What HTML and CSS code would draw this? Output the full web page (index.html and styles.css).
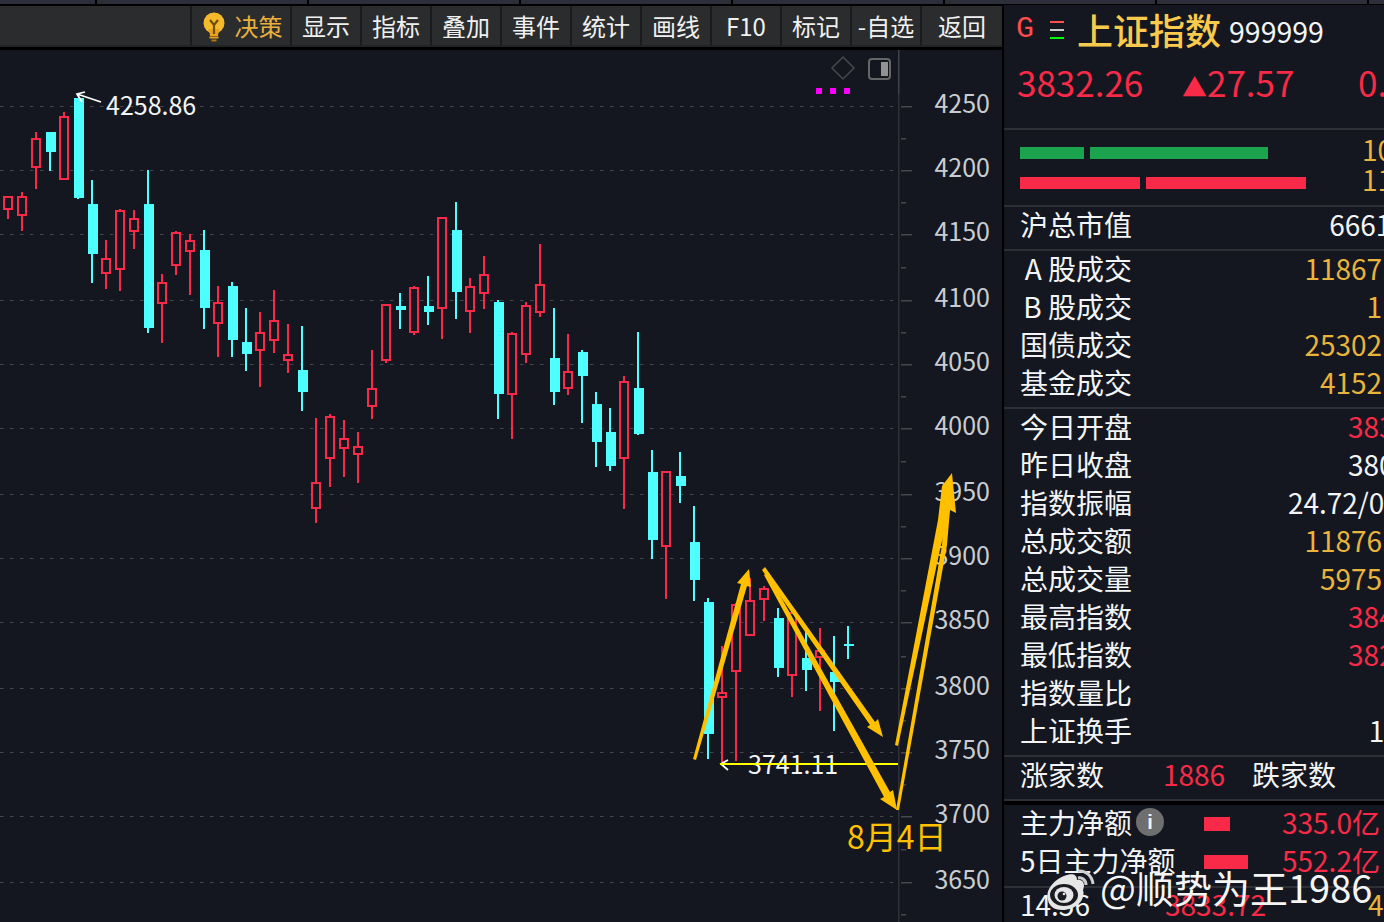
FILE: index.html
```html
<!DOCTYPE html>
<html lang="zh-CN">
<head>
  <meta charset="UTF-8">
  <title>上证指数 999999</title>
  <link rel="stylesheet" href="styles.css">
</head>
<body>
  <div class="tabs">
    <span class="tab tab-first"></span><span class="tab"></span><span class="tab"></span><span class="tab"></span><span class="tab"></span><span class="tab"></span><span class="tab"></span><span class="tab"></span>
  </div>

  <div class="main">
    <div class="left">
      <div class="toolbar">
        <div class="tool-space"></div>
        <div class="tool tool-wide">
          <svg class="bulb" width="22" height="30" viewBox="0 0 22 30">
            <circle cx="11" cy="11" r="10.5" fill="#f6b92c"/>
            <path d="M5 17 C7 21 7 23 7 24 H15 C15 23 15 21 17 17 Z" fill="#e8a21c"/>
            <path d="M7 8 L11 13 L15 8 M11 13 V22" fill="none" stroke="#6e4d0c" stroke-width="2.2"/>
            <rect x="6.5" y="24.5" width="9" height="2" fill="#e8a21c"/>
            <rect x="8.5" y="27.5" width="5" height="2" fill="#a87a18"/>
          </svg>
          <span class="tool-gold">决策</span>
        </div>
        <div class="tool">显示</div>
        <div class="tool">指标</div>
        <div class="tool">叠加</div>
        <div class="tool">事件</div>
        <div class="tool">统计</div>
        <div class="tool">画线</div>
        <div class="tool">F10</div>
        <div class="tool">标记</div>
        <div class="tool">-自选</div>
        <div class="tool tool-last">返回</div>
      </div>

      <div class="chart">
        <svg id="kline" width="1002" height="872" viewBox="0 50 1002 872">
          <g id="grid"></g>
          <g id="candles"></g>

          <rect x="898" y="50" width="1.5" height="44" fill="#3f4248"/>
          <rect x="898" y="94" width="1.5" height="828" fill="#2e3137"/>

          <path class="diamond" d="M843 57 L854 68 L843 79 L832 68 Z"/>
          <rect class="pane-box" x="869" y="59" width="21" height="20" rx="3"/>
          <rect x="881" y="62" width="7" height="14" fill="#929292"/>
          <rect class="dot" x="816" y="88" width="6" height="6"/>
          <rect class="dot" x="830" y="88" width="6" height="6"/>
          <rect class="dot" x="844" y="88" width="6" height="6"/>

          <g class="axis">
            <text x="990" y="113">4250</text>
            <text x="990" y="177">4200</text>
            <text x="990" y="241">4150</text>
            <text x="990" y="307">4100</text>
            <text x="990" y="371">4050</text>
            <text x="990" y="435">4000</text>
            <text x="990" y="501">3950</text>
            <text x="990" y="565">3900</text>
            <text x="990" y="629">3850</text>
            <text x="990" y="695">3800</text>
            <text x="990" y="759">3750</text>
            <text x="990" y="823">3700</text>
            <text x="990" y="889">3650</text>
          </g>

          <path class="pointer" d="M101 102 L77 94 M85 92 L77 94 L82 102"/>
          <text class="price-tag" x="106" y="115">4258.86</text>
          <text class="price-tag" x="748" y="774">3741.11</text>
          <path class="pointer" d="M728 760 L721 764 L728 770"/>
          <rect x="720" y="763" width="178" height="2" fill="#ffff00"/>

          <g class="drawn">
            <polygon points="693,759 741,584 737,583 749,569 751,587 747,586 696,760"/>
            <polygon points="765,567 875,722 878,719 883,737 867,727 870,725 762,570"/>
            <polygon points="767,572 890,792 893,790 897,810 880,799 884,797 764,575"/>
            <polygon points="895,745 938,520 942,486 952,473 950,510 941,545 898,746"/>
            <polygon points="896,810 942,545 944,508 952,473 956,513 950,510 947,545 899,810"/>
          </g>
          <text class="date-note" x="847" y="849">8月4日</text>
        </svg>
      </div>
    </div>

    <div class="panel">
      <div class="head">
        <span class="g-mark">G</span>
        <span class="menu-mark"><i class="m-red"></i><i class="m-gray"></i><i class="m-green"></i></span>
        <span class="index-name">上证指数</span>
        <span class="index-code">999999</span>
      </div>
      <div class="quote red">
        <span class="q-price">3832.26</span>
        <span class="q-change"><span class="q-up">▲</span>27.57</span>
        <span>0.72%</span>
      </div>

      <div class="group bars">
        <div class="bar-row">
          <div class="bar-track"><span class="bar green" style="width:64px"></span><span class="bar green" style="width:178px"></span></div>
          <span class="gold">10</span>
        </div>
        <div class="bar-row">
          <div class="bar-track"><span class="bar redbg" style="width:120px"></span><span class="bar redbg" style="width:160px"></span></div>
          <span class="gold">11</span>
        </div>
      </div>

      <div class="group">
        <div class="row"><span class="lbl">沪总市值</span><span class="val">6661.0 亿</span></div>
      </div>

      <div class="group">
        <div class="row"><span class="lbl">A 股成交</span><span class="val gold">11867.32亿</span></div>
        <div class="row"><span class="lbl">B 股成交</span><span class="val gold">1.25亿</span></div>
        <div class="row"><span class="lbl">国债成交</span><span class="val gold">25302.10亿</span></div>
        <div class="row"><span class="lbl">基金成交</span><span class="val gold">4152.46亿</span></div>
      </div>

      <div class="group">
        <div class="row"><span class="lbl">今日开盘</span><span class="val red">3830.15</span></div>
        <div class="row"><span class="lbl">昨日收盘</span><span class="val">3804.69</span></div>
        <div class="row"><span class="lbl">指数振幅</span><span class="val">24.72/0.65%</span></div>
        <div class="row"><span class="lbl">总成交额</span><span class="val gold">11876.00亿</span></div>
        <div class="row"><span class="lbl">总成交量</span><span class="val gold">5975.00亿</span></div>
        <div class="row"><span class="lbl">最高指数</span><span class="val red">3845.37</span></div>
        <div class="row"><span class="lbl">最低指数</span><span class="val red">3820.65</span></div>
        <div class="row"><span class="lbl">指数量比</span><span class="val"></span></div>
        <div class="row"><span class="lbl">上证换手</span><span class="val">1.25%</span></div>
      </div>

      <div class="group">
        <div class="row row-count">
          <span class="lbl">涨家数</span><span class="red">1886</span><span class="lbl">跌家数</span>
        </div>
      </div>

      <div class="group group-flow">
        <div class="row row-flow">
          <span class="lbl lbl-icon">主力净额<i class="info">i</i></span>
          <span class="bar redbg flow-bar" style="width:26px"></span>
          <span class="red flow-val">335.0亿</span>
        </div>
        <div class="row row-flow">
          <span class="lbl">5日主力净额</span>
          <span class="bar redbg flow-bar" style="width:44px"></span>
          <span class="red flow-val">552.2亿</span>
        </div>
      </div>

      <div class="tick-row">
        <span class="lbl">14:56</span><span class="red">3833.72</span><span class="gold">4</span>
      </div>

      <div class="watermark">
        <svg width="64" height="56" viewBox="0 0 64 56">
          <path d="M8 40 C5 30 14 20 24 16 C32 13 37 14 37 20 C42 19 46 23 43 30 C46 40 36 50 22 50 C14 50 9 46 8 40Z" fill="#e6e6e6"/>
          <ellipse cx="24" cy="35" rx="14" ry="11" fill="#1a1c22"/>
          <ellipse cx="24" cy="35" rx="9.5" ry="8" fill="#e6e6e6"/>
          <circle cx="22" cy="36" r="4.5" fill="#1a1c22"/>
          <circle cx="24" cy="34" r="1.3" fill="#e6e6e6"/>
          <path d="M38 11 C46 10 52 16 53 24 M38 18 C42 17 46 20 46 25" fill="none" stroke="#cfcfcf" stroke-width="3"/>
        </svg>
        <span class="wm-text">@顺势为王1986</span>
      </div>
    </div>
  </div>

  <script src="chart.js"></script>
</body>
</html>
```

FILE: styles.css
```css
* {
  box-sizing: border-box;
}
html, body {
  margin: 0;
  height: 922px;
  overflow: hidden;
}
body {
  width: 1384px;
  position: relative;
  background: #000;
  color: #f2f4f6;
  font-family: "Noto Sans CJK SC", "Noto Sans", sans-serif;
  font-size: 28px;
}

.tabs {
  display: flex;
  gap: 2px;
  height: 4px;
  margin-bottom: 2px;
}
.tab {
  flex: 0 0 210px;
  background: #2c2f3a;
}
.tab-first {
  flex-basis: 95px;
}

.main {
  display: flex;
  gap: 2px;
  height: 916px;
}
.left {
  flex: 0 0 1002px;
  display: flex;
  flex-direction: column;
}

/* toolbar */
.toolbar {
  display: flex;
  height: 41px;
  margin-bottom: 3px;
  border-bottom: 2px solid #212326;
  background: #2a2c2e;
  font-size: 24px;
  color: #f0f0f0;
}
.tool-space {
  flex: 0 0 190px;
}
.tool {
  flex: 0 0 70px;
  display: flex;
  align-items: center;
  justify-content: center;
  border-left: 2px solid #191b1f;
}
.tool-wide {
  flex-basis: 100px;
  gap: 10px;
  padding-left: 3px;
}
.tool-last {
  flex: 1;
}
.tool-gold {
  color: #e9b03c;
}
.bulb {
  margin-top: 2px;
}

/* chart */
.chart {
  flex: 1;
  background: #14171f;
}
#kline {
  display: block;
}
#grid line {
  stroke: #44474c;
  stroke-width: 1.2;
}
.axis text {
  font-size: 25px;
  fill: #c9cdd2;
  text-anchor: end;
}
.diamond {
  fill: none;
  stroke: #45484d;
  stroke-width: 1.5;
}
.pane-box {
  fill: none;
  stroke: #666;
  stroke-width: 2;
}
.dot {
  fill: #ff00ff;
}
.pointer {
  fill: none;
  stroke: #fff;
  stroke-width: 1.8;
}
.price-tag {
  font-size: 25px;
  fill: #f2f4f6;
}
.drawn polygon {
  fill: #ffc000;
}
.date-note {
  font-size: 32px;
  fill: #ffc000;
}

/* right panel, wider than the window: the values run off its right edge */
.panel {
  flex: 0 0 445px;
  min-width: 0;
  height: 917px;
  margin-top: -1px;
  background: #14171f;
}
.head {
  display: flex;
  align-items: center;
  height: 48px;
  padding-left: 12px;
}
.g-mark {
  width: 34px;
  font-family: "Liberation Mono", monospace;
  font-size: 30px;
  color: #ff4b4b;
}
.menu-mark {
  display: flex;
  flex-direction: column;
  gap: 6px;
  width: 14px;
  margin-right: 13px;
  margin-top: 2px;
}
.menu-mark i {
  height: 2px;
}
.m-red {
  background: #ff5050;
}
.m-gray {
  background: #c8c8c8;
}
.m-green {
  background: #00ff00;
}
.index-name {
  font-size: 36px;
  font-weight: 500;
  color: #f8ca4d;
  margin-right: 8px;
}
.index-code {
  margin-top: 2px;
  font-size: 28.5px;
}

.quote {
  display: flex;
  align-items: center;
  height: 75px;
  padding: 0 0 18px 13px;
  font-size: 35px;
  white-space: nowrap;
}
.q-price {
  flex: 0 0 165px;
}
.q-change {
  flex: 0 0 176px;
}
.q-up {
  font-size: 25px;
}

.red {
  color: #f92a47;
}
.gold {
  color: #e9b43c;
}

.group {
  border-top: 2px solid #2e3038;
  padding-bottom: 4px;
}
.bars {
  height: 77px;
  padding: 8px 0 0 16px;
}
.bar-row {
  display: flex;
  align-items: center;
  height: 30px;
  white-space: nowrap;
}
.bar-row .gold {
  margin-top: -8px;
}
.bar-track {
  flex: 0 0 342px;
  display: flex;
  gap: 6px;
}
.bar {
  display: block;
  height: 12px;
}
.green {
  background: #1ba34d;
}
.redbg {
  background: #f92a47;
}

.row {
  display: flex;
  align-items: center;
  height: 38px;
  padding: 0 0 4px 16px;
  line-height: 34px;
  white-space: nowrap;
}
.lbl {
  min-width: 112px;
  text-align: right;
}
.val {
  margin-left: auto;
}
.row-count {
  display: grid;
  grid-template-columns: 143px 89px auto;
}
.row-count .lbl {
  min-width: 0;
  text-align: left;
}
.group-flow {
  padding: 4px 0 5px;
  box-shadow: inset 0 4px 0 #000;
}
.row-flow {
  display: grid;
  grid-template-columns: 184px 78px 96px;
}
.row-flow .lbl {
  text-align: left;
}
.lbl-icon {
  display: flex;
  align-items: center;
  gap: 4px;
}
.info {
  width: 28px;
  height: 28px;
  border-radius: 50%;
  background: #6f6f6f;
  font: bold 20px/28px "Liberation Sans", sans-serif;
  text-align: center;
  color: #f4f4f4;
}
.flow-bar {
  height: 14px;
  margin-top: 4px;
}
.tick-row {
  display: grid;
  grid-template-columns: 145px 203px auto;
  align-items: center;
  height: 35px;
  padding-left: 16px;
  border-top: 2px solid #2e3038;
  line-height: 33px;
  white-space: nowrap;
}
.tick-row .lbl {
  min-width: 0;
  text-align: left;
}

.watermark {
  position: absolute;
  left: 1040px;
  top: 860px;
  display: flex;
  align-items: flex-start;
}
.wm-text {
  margin-left: -4px;
  font-size: 38px;
  line-height: 54px;
  color: #f5f5f5;
  white-space: nowrap;
}
```

FILE: chart.js
```js
// red / cyan candles, one every 14px from x=8
// [colour, wickTop, bodyTop, bodyBottom, wickBottom]
const candles = [
  ["r",196,196,210,219], ["r",192,196,216,231], ["r",132,138,168,189], ["c",132,132,152,171],
  ["r",112,116,180,180], ["c",98,98,198,199], ["c",180,204,254,283], ["r",240,258,274,289],
  ["r",209,210,270,291], ["r",210,218,232,249], ["c",170,204,328,333], ["r",274,282,304,343],
  ["r",231,232,266,275], ["r",234,240,252,295], ["c",230,250,308,329], ["r",286,302,324,357],
  ["c",282,286,340,357], ["c",308,342,354,371], ["r",312,332,351,387], ["r",290,320,341,353],
  ["r",324,354,361,373], ["c",326,370,392,411], ["r",418,482,509,523], ["r",414,416,459,487],
  ["r",420,438,449,477], ["r",432,446,455,483], ["r",350,388,407,419], ["r",304,304,361,363],
  ["c",293,306,310,329], ["r",286,287,333,335], ["c",276,306,312,325], ["r",217,217,309,339],
  ["c",202,230,292,319], ["r",278,286,312,333], ["r",256,274,294,309], ["c",300,302,394,419],
  ["r",332,333,395,439], ["r",302,305,355,363], ["r",244,284,313,317], ["c",308,358,392,405],
  ["r",334,371,389,395], ["c",350,352,376,423], ["c",392,404,442,467], ["c",408,432,466,471],
  ["r",376,381,459,509], ["c",332,388,434,435], ["c",450,472,540,559], ["r",471,471,547,599],
  ["c",452,476,486,503], ["c",506,542,580,601], ["c",598,602,734,759], ["r",646,692,698,763],
  ["r",603,604,672,761], ["r",578,600,636,636], ["r",586,588,600,621], ["c",608,618,668,677],
  ["r",611,612,676,697], ["c",629,658,670,691], ["r",628,650,658,711], ["c",636,672,682,731],
  ["c",626,644,646,659]
];
const gridLines = [106, 170, 234, 300, 364, 428, 494, 558, 622, 688, 752, 816, 882];
const minorTicks = [138, 202, 267, 332, 396, 461, 526, 590, 656, 720, 784, 849, 914];

const NS = "http://www.w3.org/2000/svg";
const RED = "#f92a47";
const CYAN = "#4dffff";
const BG = "#14171f";

function add(parent, name, attrs) {
  const el = document.createElementNS(NS, name);
  for (const key in attrs) el.setAttribute(key, attrs[key]);
  parent.appendChild(el);
}

const grid = document.getElementById("grid");
gridLines.forEach(function (y) {
  add(grid, "line", {x1: 0, x2: 893, y1: y + 0.5, y2: y + 0.5, "stroke-dasharray": "3.5 6.5"});
  add(grid, "rect", {x: 901, y: y, width: 11, height: 1.5, fill: "#44474c"});
});
minorTicks.forEach(function (y) {
  add(grid, "rect", {x: 901, y: y, width: 5, height: 1.5, fill: "#44474c"});
});

const group = document.getElementById("candles");
candles.forEach(function (c, i) {
  const x = 8 + i * 14;
  const colour = c[0] === "r" ? RED : CYAN;
  add(group, "rect", {x: x - 1, y: c[1], width: 2, height: c[4] - c[1], fill: colour});
  if (c[0] === "r") {
    add(group, "rect", {x: x - 4, y: c[2] + 1, width: 8, height: c[3] - c[2] - 2, fill: BG, stroke: colour, "stroke-width": 2});
  } else {
    add(group, "rect", {x: x - 4, y: c[2], width: 10, height: c[3] - c[2], fill: colour});
  }
});
```
